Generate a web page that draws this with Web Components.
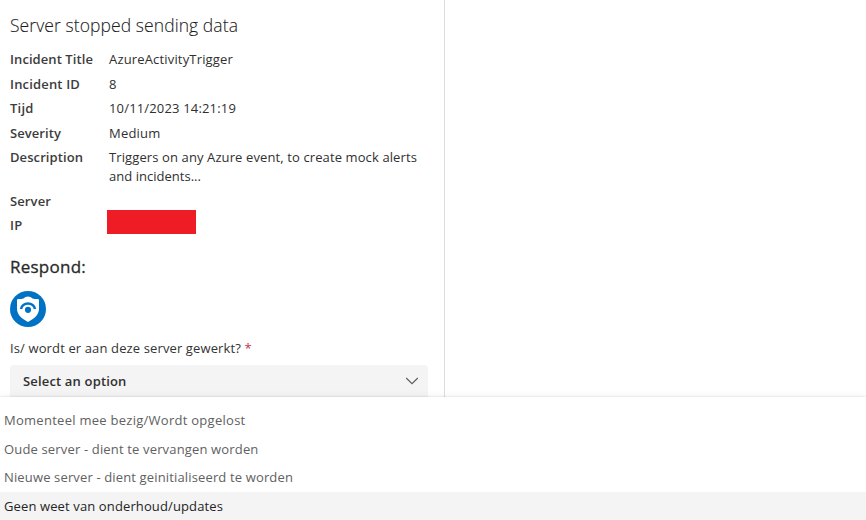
<!DOCTYPE html>
<html lang="nl">
<head>
<meta charset="utf-8">
<title>Incident card</title>
<style>
html,body{margin:0;height:100%;overflow:hidden;background:#fff}
body{font-family:"Open Sans","Noto Sans",sans-serif;color:#242424;font-size:13px}
</style>
</head>
<body>
<incident-page></incident-page>
<script>
const define = (name, html, setup) => customElements.define(name, class extends HTMLElement {
  connectedCallback() {
    if (this.shadowRoot) return;
    this.attachShadow({ mode: 'open' }).innerHTML = html;
    if (setup) setup(this);
  }
});

// Text line tracked so that it takes exactly the width given by "w".
define('fit-text', `<style>
:host{display:inline-block;white-space:pre}
span{display:inline-block}
</style><span><slot></slot></span>`, el => {
  const span = el.shadowRoot.querySelector('span');
  const natural = span.getBoundingClientRect().width;
  const n = el.textContent.length;
  span.style.letterSpacing = ((+el.getAttribute('w') - natural) / n) + 'px';
});

define('fact-row', `<style>
:host{display:grid;grid-template-columns:99px 1fr;line-height:19px}
.k{font-weight:600;color:#3c3c3c}
.v{display:flex;flex-direction:column;align-items:flex-start;color:#303030}
</style><div class="k"><slot name="k"></slot></div><div class="v"><slot></slot></div>`);

define('redacted-box', `<style>
:host{display:block;width:89px;height:24px;margin:-6px 0 -3px -2px;background:#ee1c25}
</style>`);

define('shield-badge', `<style>
:host{display:block;width:36px;height:36px}svg{display:block}
</style><svg width="36" height="36" viewBox="0 0 36 36">
<circle cx="18" cy="18" r="18" fill="#0072c6"/>
<path fill="#fff" d="M18 5.600C16.600 5.600 14.600 6.300 13.400 7.600C11.500 8.500 9.500 7.300 7 8.500V17.800C7 24 12.500 28.200 18 31C23.500 28.200 29 24 29 17.800V8.500C26.500 7.300 24.500 8.500 22.600 7.600C21.400 6.300 19.400 5.600 18 5.600Z"/>
<path d="M11 18A7.100 6.700 0 0 1 25 18" fill="none" stroke="#0072c6" stroke-width="2.500"/>
<circle cx="18" cy="18.800" r="3.100" fill="#0072c6"/></svg>`);

define('option-select', `<style>
:host{display:flex;align-items:center;justify-content:space-between;box-sizing:border-box;height:33px;padding:0 9px 0 13px;background:#f4f4f4;border-radius:4px 4px 0 0;font-weight:600;color:#303030}
svg{display:block}
</style><slot></slot><svg width="14" height="8" viewBox="0 0 14 8"><path d="M1.200 1L7 6.700L12.800 1" fill="none" stroke="#5c5c5c" stroke-width="1.100"/></svg>`);

define('option-item', `<style>
:host{display:flex;align-items:center;height:28.600px;padding-left:4px;color:#616161;line-height:19px}
:host([active]){background:#f4f4f4;color:#242424}
</style><slot></slot>`);

define('option-list', `<style>
:host{display:block;box-sizing:border-box;padding-top:9.300px;background:#fff;box-shadow:0 0 2px rgba(0,0,0,.16),0 0 10px rgba(0,0,0,.05)}
</style><slot></slot>`);

define('incident-card', `<style>
:host{display:flex;flex-direction:column;box-sizing:border-box;width:445px;height:397px;padding:13px 16px 0 10px;border-right:1px solid #dedede;overflow:hidden}
h1,h2{margin:0;line-height:25px}
h1{font-size:17.500px;font-weight:300;color:#1c1c1c;-webkit-text-stroke:.1px #1c1c1c}
.facts{display:flex;flex-direction:column;gap:5.500px;margin-top:12.300px}
h2{font-size:17px;font-weight:400;margin-top:18.700px;color:#2a2a2a;-webkit-text-stroke:.3px #2a2a2a}
shield-badge{margin-top:12px}
.q{line-height:19px;margin:12px 0 7px;color:#333}
.q b{font-weight:400;color:#c4314b}
option-select{flex:none}
</style>
<h1><fit-text w="228">Server stopped sending data</fit-text></h1>
<div class="facts">
<fact-row><fit-text slot="k" w="83">Incident Title</fit-text><fit-text w="124">AzureActivityTrigger</fit-text></fact-row>
<fact-row><fit-text slot="k" w="70">Incident ID</fit-text><fit-text w="8">8</fit-text></fact-row>
<fact-row><fit-text slot="k" w="23.500">Tijd</fit-text><fit-text w="127">10/11/2023 14:21:19</fit-text></fact-row>
<fact-row><fit-text slot="k" w="51">Severity</fit-text><fit-text w="51.500">Medium</fit-text></fact-row>
<fact-row><fit-text slot="k" w="73">Description</fit-text><fit-text w="308">Triggers on any Azure event, to create mock alerts</fit-text><fit-text w="92">and incidents...</fit-text></fact-row>
<fact-row><fit-text slot="k" w="41">Server</fit-text></fact-row>
<fact-row><fit-text slot="k" w="12.500">IP</fit-text><redacted-box></redacted-box></fact-row>
</div>
<h2><fit-text w="76">Respond:</fit-text></h2>
<shield-badge></shield-badge>
<div class="q"><fit-text w="231">Is/ wordt er aan deze server gewerkt?</fit-text><b> *</b></div>
<option-select><fit-text w="103.500">Select an option</fit-text></option-select>`);

define('incident-page', `<style>
:host{display:grid;grid-template-rows:397px 123px;height:520px;overflow:hidden}
option-list{z-index:1}
</style>
<incident-card></incident-card>
<option-list>
<option-item><fit-text w="241.500">Momenteel mee bezig/Wordt opgelost</fit-text></option-item>
<option-item><fit-text w="254.500">Oude server - dient te vervangen worden</fit-text></option-item>
<option-item><fit-text w="289">Nieuwe server - dient geinitialiseerd te worden</fit-text></option-item>
<option-item active><fit-text w="219">Geen weet van onderhoud/updates</fit-text></option-item>
</option-list>`);
</script>
</body>
</html>
